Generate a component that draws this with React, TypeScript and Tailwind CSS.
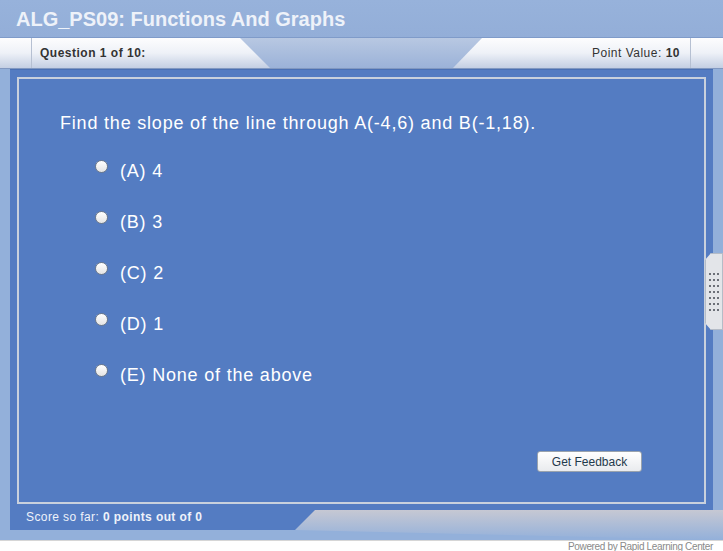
const options = ["(A) 4", "(B) 3", "(C) 2", "(D) 1", "(E) None of the above"];

export default function App() {
  return (
    <div className="relative w-[723px] h-[551px] overflow-hidden bg-white flex flex-col font-['Liberation_Sans',Arial,sans-serif]">
      {/* Title bar */}
      <div className="h-[38px] shrink-0 bg-linear-to-b from-[#97b2db] to-[#93aed8] border-b border-[#7f9bc9] flex items-center pl-[16px] text-[20px] font-bold text-[#eef2f9]">
        ALG_PS09: Functions And Graphs
      </div>

      {/* Header bar */}
      <div className="h-[31px] shrink-0 flex justify-between bg-linear-to-b from-[#b8c8e2] to-[#9bb2d8] border-b border-[#8198c0]">
        <div className="w-[270px] h-full flex bg-linear-to-b from-[#fdfdfe] via-[#eef1f7] to-[#c4cfe3] [clip-path:polygon(0_0,240px_0,270px_100%,0_100%)]">
          <div className="w-[32px] h-full border-r border-[#b6c0d2]" />
          <div className="flex items-center pl-[8px] text-[12px] tracking-[0.5px] font-bold text-[#333]">Question 1 of 10:</div>
        </div>
        <div className="w-[270px] h-full flex bg-linear-to-b from-[#fdfdfe] via-[#eef1f7] to-[#c4cfe3] [clip-path:polygon(29px_0,100%_0,100%_100%,0_100%)]">
          <div className="flex-1 flex items-center justify-end pr-[10px] text-[12px] tracking-[0.5px] text-[#333]">
            Point Value:&nbsp;<span className="font-bold">10</span>
          </div>
          <div className="w-[33px] h-full border-l border-[#b6c0d2]" />
        </div>
      </div>

      {/* Main row */}
      <div className="h-[441px] shrink-0 flex bg-[#93b0da]">
        <div className="w-[10px]" />
        <div className="flex-1 bg-[#547cc2] pt-[7px] px-[7px] border-t border-[#4a70b4]">
          <div className="h-[427px] border-2 border-[#c9d1dd] flex flex-col">
            <div className="pl-[41px] pt-[34px] text-[18px] leading-[21px] tracking-[0.8px] text-white">
              Find the slope of the line through A(-4,6) and B(-1,18).
            </div>
            <div className="mt-[12px] flex flex-col">
              {options.map((o) => (
                <div key={o} className="h-[51px] flex items-center pl-[76px]">
                  <div className="w-[13px] h-[13px] rounded-full bg-linear-to-b from-[#ffffff] to-[#e4e4e4] border border-[#6f7b8c] mb-[10px]" />
                  <span className="ml-[12px] text-[18px] leading-[21px] tracking-[0.8px] text-white">{o}</span>
                </div>
              ))}
            </div>
            <div className="mt-[50px] self-end mr-[62px] w-[105px] h-[21px] rounded-[3px] border border-[#9aa3ad] bg-linear-to-b from-[#ffffff] to-[#e9ebee] flex items-center justify-center text-[12px] text-[#1f3a4c]">
              Get Feedback
            </div>
          </div>
        </div>
        <div className="w-[10px]" />
      </div>

      {/* Bottom row */}
      <div className="h-[30px] shrink-0 flex bg-[#93b0da]">
        <div className="w-[10px]" />
        <div className="w-[305px] h-[20px] bg-[#547cc2] pl-[16px] text-[12px] leading-[14px] tracking-[0.4px] text-[#eef2fa]">
          Score so far: <span className="font-bold">0 points out of 0</span>
        </div>
        <div className="flex-1 -ml-[20px] h-full bg-linear-to-b from-[#c6c8d3] to-[#93b0da] [clip-path:polygon(20px_0,100%_0,100%_100%,0_67%)]" />
      </div>

      {/* Footer */}
      <div className="h-[11px] shrink-0 border-t border-[#d6d6d6] bg-white flex justify-end pr-[10px] text-[10px] leading-[12px] tracking-[-0.35px] text-[#8a8a8a] overflow-hidden">
        Powered by Rapid Learning Center
      </div>

      {/* Side handle */}
      <div className="absolute left-[705px] top-[253px] w-[18px] h-[77px] bg-[#e3e5e9] border border-[#b5bcc7] [clip-path:polygon(6px_0,100%_0,100%_100%,6px_100%,0_calc(100%-7px),0_7px)] flex items-center justify-center">
        <div className="grid grid-cols-3 gap-x-[2px] gap-y-[4px]">
          {Array.from({ length: 21 }).map((_, i) => (
            <div key={i} className="w-[2px] h-[2px] bg-[#6c7078]" />
          ))}
        </div>
      </div>
    </div>
  );
}
